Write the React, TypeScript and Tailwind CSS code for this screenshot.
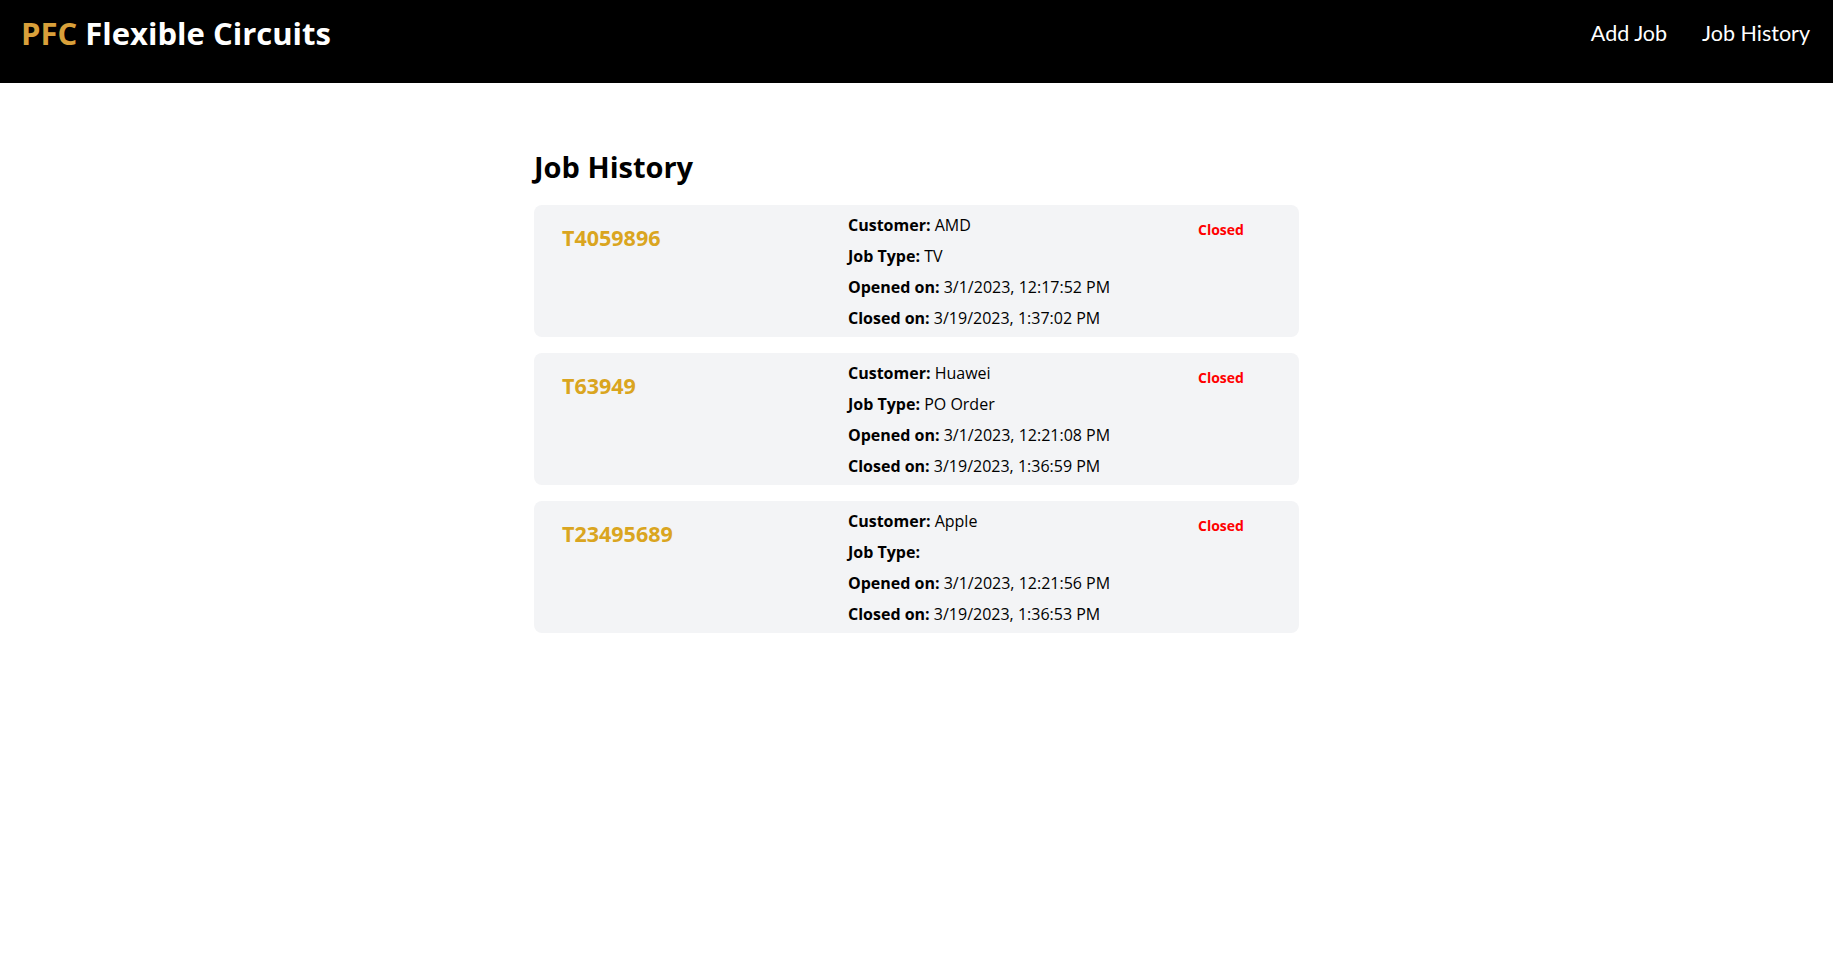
import React from "react";

type Job = {
  id: string;
  customer: string;
  jobType: string;
  opened: string;
  closed: string;
};

const jobs: Job[] = [
  { id: "T4059896", customer: "AMD", jobType: "TV", opened: "3/1/2023, 12:17:52 PM", closed: "3/19/2023, 1:37:02 PM" },
  { id: "T63949", customer: "Huawei", jobType: "PO Order", opened: "3/1/2023, 12:21:08 PM", closed: "3/19/2023, 1:36:59 PM" },
  { id: "T23495689", customer: "Apple", jobType: "", opened: "3/1/2023, 12:21:56 PM", closed: "3/19/2023, 1:36:53 PM" },
];

function Row({ label, value }: { label: string; value: string }) {
  return (
    <div className="text-[16px] leading-[31px] text-black">
      <span className="font-bold">{label}</span> {value}
    </div>
  );
}

export default function App() {
  return (
    <div className="min-h-screen bg-white font-['Open_Sans',sans-serif]">
      <header className="h-[83px] bg-black flex items-start justify-between pl-[21px] pr-[23px]">
        <div className="text-[31px] leading-[40px] font-bold pt-[13px] whitespace-nowrap font-['Open_Sans',sans-serif]">
          <span className="text-[#d9a03a]">PFC</span> <span className="text-white">Flexible Circuits</span>
        </div>
        <nav className="flex gap-[35px] pt-[18px] text-[21.5px] leading-[30px] text-white font-['Lato',sans-serif]">
          <a href="#">Add Job</a>
          <a href="#">Job History</a>
        </nav>
      </header>
      <main className="w-[765px] mx-auto pt-[64px]">
        <h1 className="text-[29px] leading-[40px] font-bold text-black">Job History</h1>
        <div className="mt-[18px] flex flex-col gap-[16px]">
          {jobs.map((j) => (
            <div key={j.id} className="bg-[#f3f4f6] rounded-lg px-[28px] pt-[5px] pb-[3px] flex items-start">
              <div className="w-[286px] mt-[12px] text-[21.5px] leading-[31px] font-bold text-[#daa520]">{j.id}</div>
              <div className="w-[350px]">
                <Row label="Customer:" value={j.customer} />
                <Row label="Job Type:" value={j.jobType} />
                <Row label="Opened on:" value={j.opened} />
                <Row label="Closed on:" value={j.closed} />
              </div>
              <div className="mt-[9px] text-[14px] leading-[21px] font-bold text-[#ff0000]">Closed</div>
            </div>
          ))}
        </div>
      </main>
    </div>
  );
}
